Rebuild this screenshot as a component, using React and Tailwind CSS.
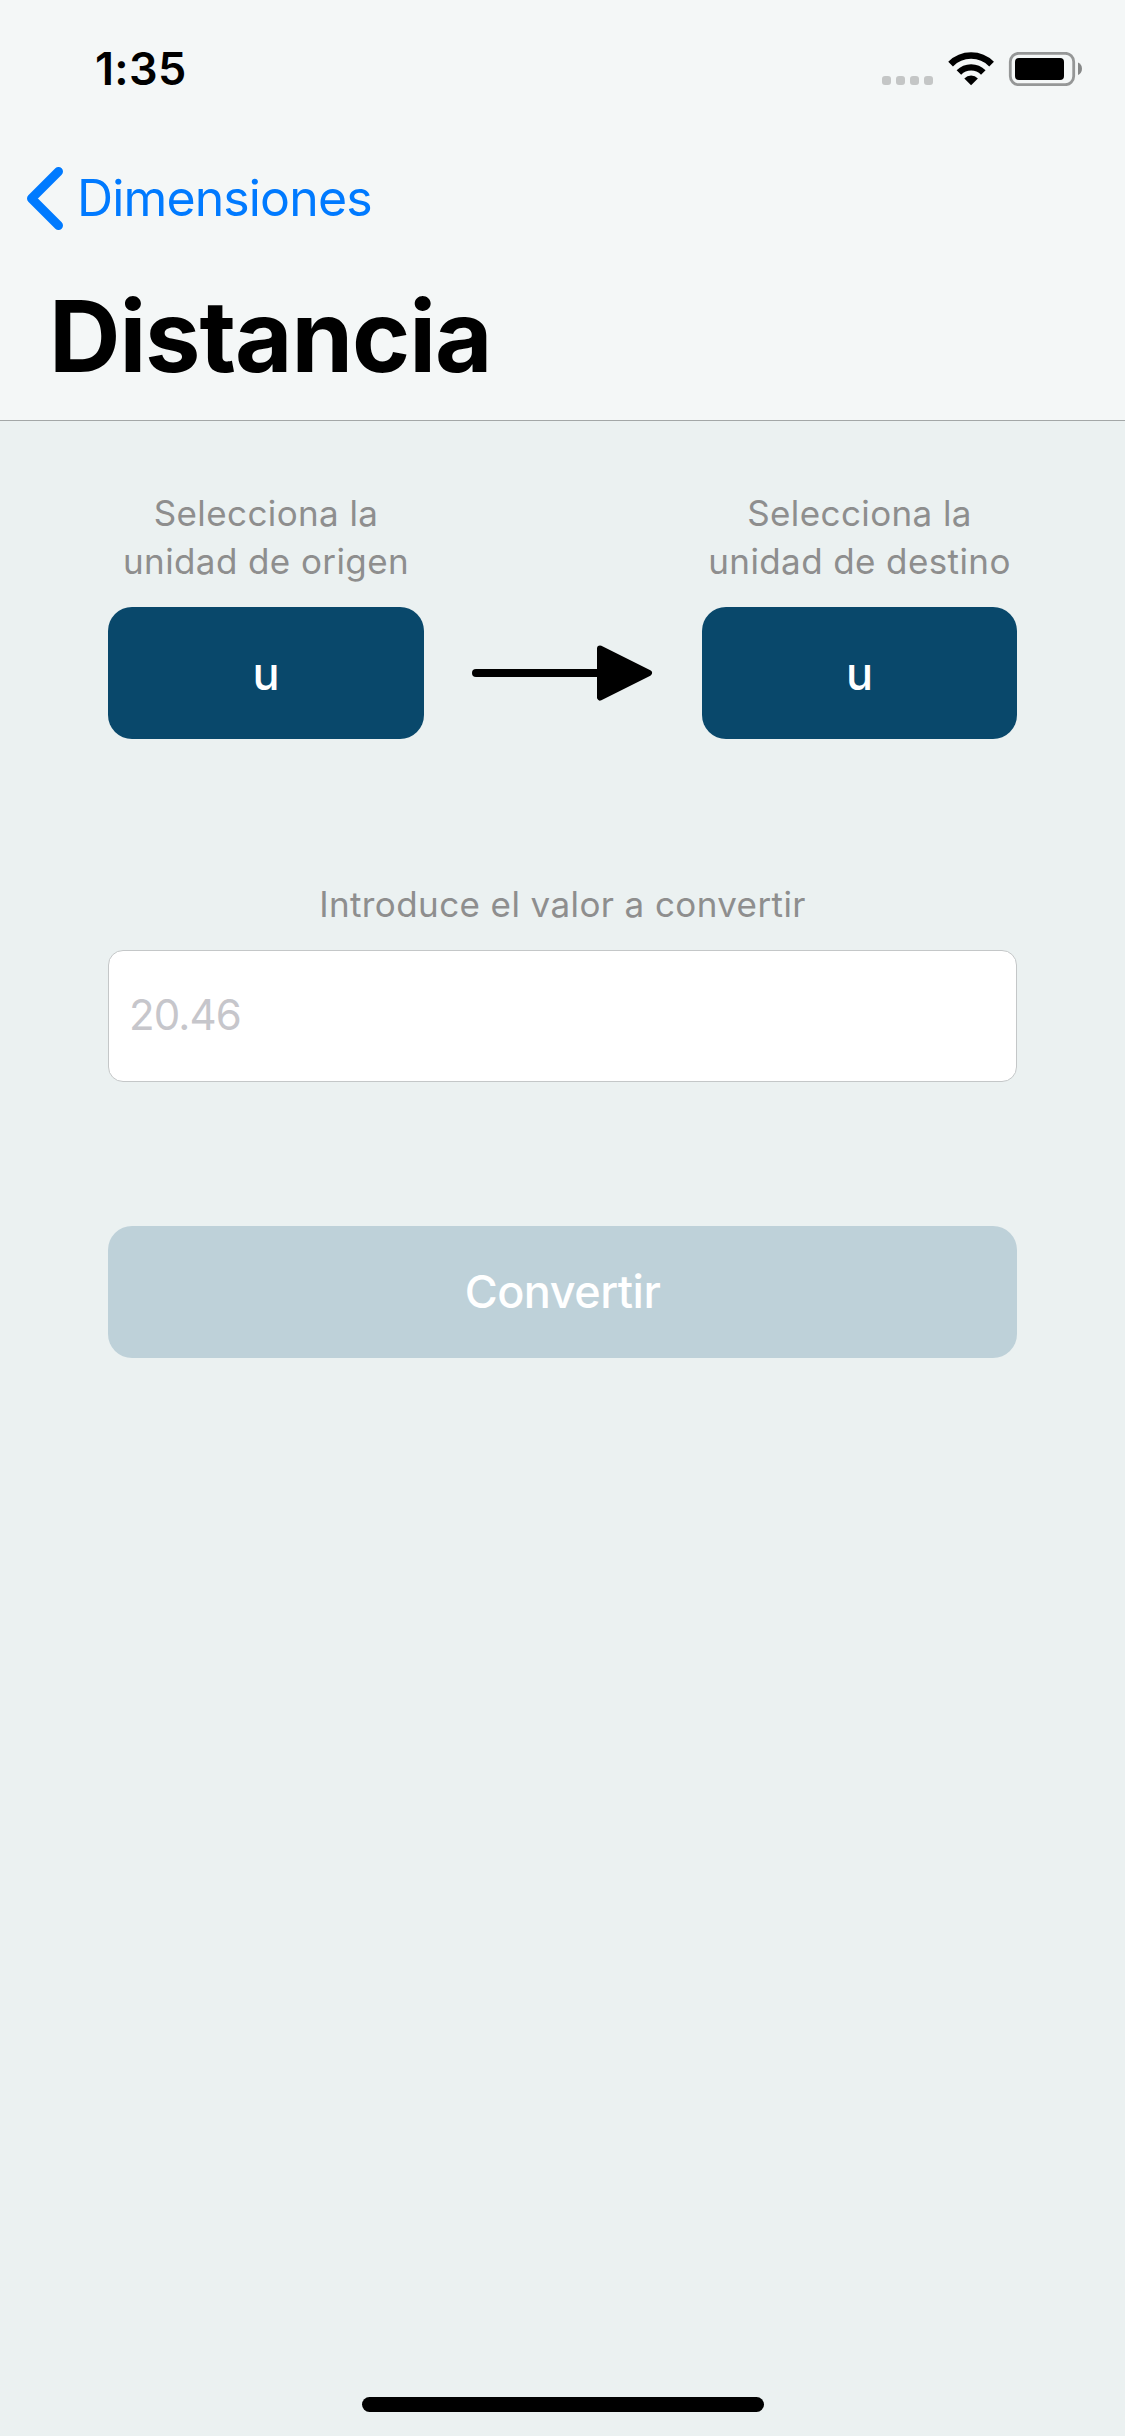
function StatusIcons() {
  return (
    <svg width="201" height="34" viewBox="882 52 201 34" aria-hidden="true">
      <g fill="#c4c6c6">
        <rect x="882" y="76" width="9" height="9" rx="3" />
        <rect x="896" y="76" width="9" height="9" rx="3" />
        <rect x="910" y="76" width="9" height="9" rx="3" />
        <rect x="924" y="76" width="9" height="9" rx="3" />
      </g>
      <g fill="none" stroke="#000">
        <path d="M950.6 64.1a28.8 28.8 0 0 1 41 0" strokeWidth="6.6" />
        <path d="M958.9 72.5a17.2 17.2 0 0 1 24.4 0" strokeWidth="6.4" />
      </g>
      <path d="M964.3 78.4a9.7 9.7 0 0 1 13.6 0L971.1 85.2z" />
      <rect x="1010.3" y="53.3" width="63.4" height="31.4" rx="8.5" fill="none" stroke="#959797" strokeWidth="2.8" />
      <rect x="1015" y="58" width="49" height="22" rx="4" />
      <path d="M1078 62.5c2.6 1.2 4 3.500 4 6.250s-1.400 5.050-4 6.250z" fill="#868888" />
    </svg>
  );
}

function UnitPicker({ target, className }) {
  return (
    <div className={`flex flex-col items-center ${className}`}>
      <p className="h-24 whitespace-nowrap text-center text-[35px] leading-[48px] tracking-[0.4px] text-[#8e8e8e]">
        Selecciona la
        <br />
        unidad de {target}
      </p>
      <button className="mt-[22px] h-[132px] w-full rounded-[24px] bg-[#09486b] text-[45px] font-medium leading-none text-white">
        u
      </button>
    </div>
  );
}

export default function App() {
  return (
    <div className="flex h-[2436px] w-[1125px] flex-col overflow-hidden bg-[#ebf1f1] font-['Inter',sans-serif]">
      <header className="h-[421px] border-b border-[#a3a7a7] bg-[#f4f7f7]">
        <div className="flex items-start justify-between pl-[95px] pr-[42px] pt-[52px]">
          <span className="h-[34px] text-[45px] font-semibold leading-[34px] tracking-[0.3px]">1:35</span>
          <StatusIcons />
        </div>
        <div className="mt-[81px] flex h-[63px] items-center pl-[26px] text-[#007aff]">
          <svg width="38" height="63" viewBox="0 0 38 63" fill="none" stroke="currentColor" strokeWidth="9" strokeLinecap="round" strokeLinejoin="round" aria-hidden="true">
            <path d="M32.500 4.500 5.500 31.500l27 27" />
          </svg>
          <span className="ml-[13px] text-[50px] leading-[63px] tracking-[-0.87px]">Dimensiones</span>
        </div>
        <h1 className="mt-[46px] pl-[49px] text-[99px] font-bold leading-[120px] tracking-[-1.1px]">Distancia</h1>
      </header>

      <main className="flex grow flex-col px-[108px] pt-[68px]">
        <div className="flex items-end">
          <UnitPicker target="origen" className="w-[316px]" />
          <div className="flex grow justify-center pb-[37px] pr-[2px]">
            <svg width="182" height="58" viewBox="471 644 182 58" aria-hidden="true">
              <path d="M476 673H600" stroke="#000" strokeWidth="8" strokeLinecap="round" />
              <path d="M600 648.500 649 673 600 697.500z" stroke="#000" strokeWidth="6" strokeLinejoin="round" />
            </svg>
          </div>
          <UnitPicker target="destino" className="w-[315px]" />
        </div>

        <label className="mt-[141px] text-center text-[35px] leading-[48px] tracking-[0.4px] text-[#8e8e8e]">
          Introduce el valor a convertir
        </label>
        <div className="mt-[22px] flex h-[132px] items-center rounded-[15px] border border-[#c4c7c8] bg-white pb-[4px] pl-[20px] text-[42px] tracking-[-0.9px] text-[#c6c6cb]">
          20.46
        </div>

        <button className="mt-[144px] h-[132px] rounded-[24px] bg-[#bed1d9] pb-[2px] text-[45px] font-medium leading-none tracking-[-0.5px] text-white">
          Convertir
        </button>
      </main>

      <footer className="flex justify-center pb-6">
        <div className="h-[15px] w-[402px] rounded-full bg-black" />
      </footer>
    </div>
  );
}
